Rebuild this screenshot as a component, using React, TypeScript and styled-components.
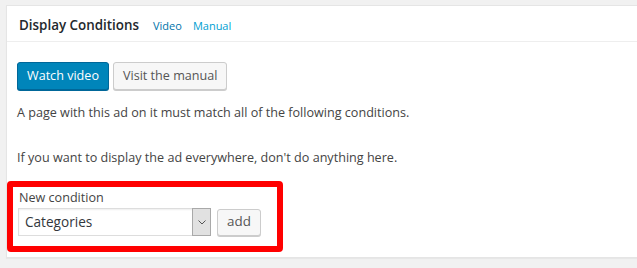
import React from 'react'
import styled, { createGlobalStyle } from 'styled-components'

const GlobalStyle = createGlobalStyle`
  html, body {
    margin: 0;
    padding: 0;
    background: #f1f1f1;
  }
  body {
    font-family: "Segoe UI", "Open Sans", "Noto Sans", sans-serif;
    font-size: 12.6px;
    color: #444;
  }
`

const Page = styled.div`
  width: 637px;
  height: 268px;
  overflow: hidden;
  padding: 5px 0 0 6px;
  box-sizing: border-box;
`

const Postbox = styled.div`
  width: 660px;
  height: 253px;
  background: #fff;
  border: 1px solid #e5e5e5;
  box-shadow: 0 1px 1px rgba(0, 0, 0, 0.04);
  box-sizing: border-box;
`

const Header = styled.div`
  display: flex;
  align-items: baseline;
  height: 36px;
  padding: 10px 0 0 12px;
  box-sizing: border-box;
  border-bottom: 1px solid #eee;
`

const Title = styled.h2`
  margin: 0 14px 0 0;
  font-size: 13.4px;
  font-weight: 600;
  color: #23282d;
`

const HeadLink = styled.a<{ $light?: boolean }>`
  font-size: 11px;
  margin-right: 11px;
  text-decoration: none;
  color: ${({ $light }) => ($light ? '#00a0d2' : '#0073aa')};
`

const Inside = styled.div`
  padding: 20px 0 0 10px;
`

const ButtonRow = styled.div`
  display: flex;
  gap: 4px;
`

const Button = styled.button<{ $primary?: boolean }>`
  height: 28px;
  padding: 0 9px 2px;
  font-family: inherit;
  font-size: 12.6px;
  border-radius: 3px;
  border: 1px solid ${({ $primary }) => ($primary ? '#006799' : '#ccc')};
  background: ${({ $primary }) => ($primary ? '#0085ba' : '#f7f7f7')};
  color: ${({ $primary }) => ($primary ? '#fff' : '#555')};
  box-shadow: ${({ $primary }) => ($primary ? '0 1px 0 #006799' : '0 1px 0 #ccc')};
  cursor: pointer;
`

const Text = styled.p`
  margin: 14px 0 0 0;
  line-height: 18px;
  & + & {
    margin-top: 27px;
  }
`

const ConditionBox = styled.div`
  margin: 14px 0 0 -10px;
  width: 276px;
  height: 71px;
  border: 6px solid #ff0000;
  border-radius: 4px;
  box-sizing: border-box;
  padding: 2px 0 0 5px;
`

const Label = styled.div`
  line-height: 17px;
  margin-left: 1px;
`

const FormRow = styled.div`
  display: flex;
  align-items: center;
  gap: 6px;
  margin-top: 2px;
`

const Select = styled.div`
  display: flex;
  width: 193px;
  height: 28px;
  border: 1px solid #ddd;
  box-sizing: border-box;
  box-shadow: inset 0 1px 2px rgba(0, 0, 0, 0.07);
  background: #fff;
`

const SelectValue = styled.div`
  flex: 1;
  padding-left: 6px;
  line-height: 26px;
  font-size: 13.6px;
  color: #32373c;
`

const SelectArrow = styled.div`
  width: 17px;
  margin: -1px -1px -1px 0;
  border: 1px solid #a9a9a9;
  background: #e1e1e1;
  display: flex;
  align-items: center;
  justify-content: center;
`

const SmallButton = styled(Button)`
  height: 27px;
  padding: 0 9px 2px;
  font-size: 13.4px;
`

export default function App() {
  return (
    <Page>
      <GlobalStyle />
      <Postbox>
        <Header>
          <Title>Display Conditions</Title>
          <HeadLink href="#">Video</HeadLink>
          <HeadLink href="#" $light>Manual</HeadLink>
        </Header>
        <Inside>
          <ButtonRow>
            <Button $primary>Watch video</Button>
            <Button>Visit the manual</Button>
          </ButtonRow>
          <Text>A page with this ad on it must match all of the following conditions.</Text>
          <Text>If you want to display the ad everywhere, don't do anything here.</Text>
          <ConditionBox>
            <Label>New condition</Label>
            <FormRow>
              <Select>
                <SelectValue>Categories</SelectValue>
                <SelectArrow>
                  <svg width="8" height="5" viewBox="0 0 8 5">
                    <path d="M0.5 0.5 L4 4 L7.5 0.5" fill="none" stroke="#555" strokeWidth="1" />
                  </svg>
                </SelectArrow>
              </Select>
              <SmallButton>add</SmallButton>
            </FormRow>
          </ConditionBox>
        </Inside>
      </Postbox>
    </Page>
  )
}
